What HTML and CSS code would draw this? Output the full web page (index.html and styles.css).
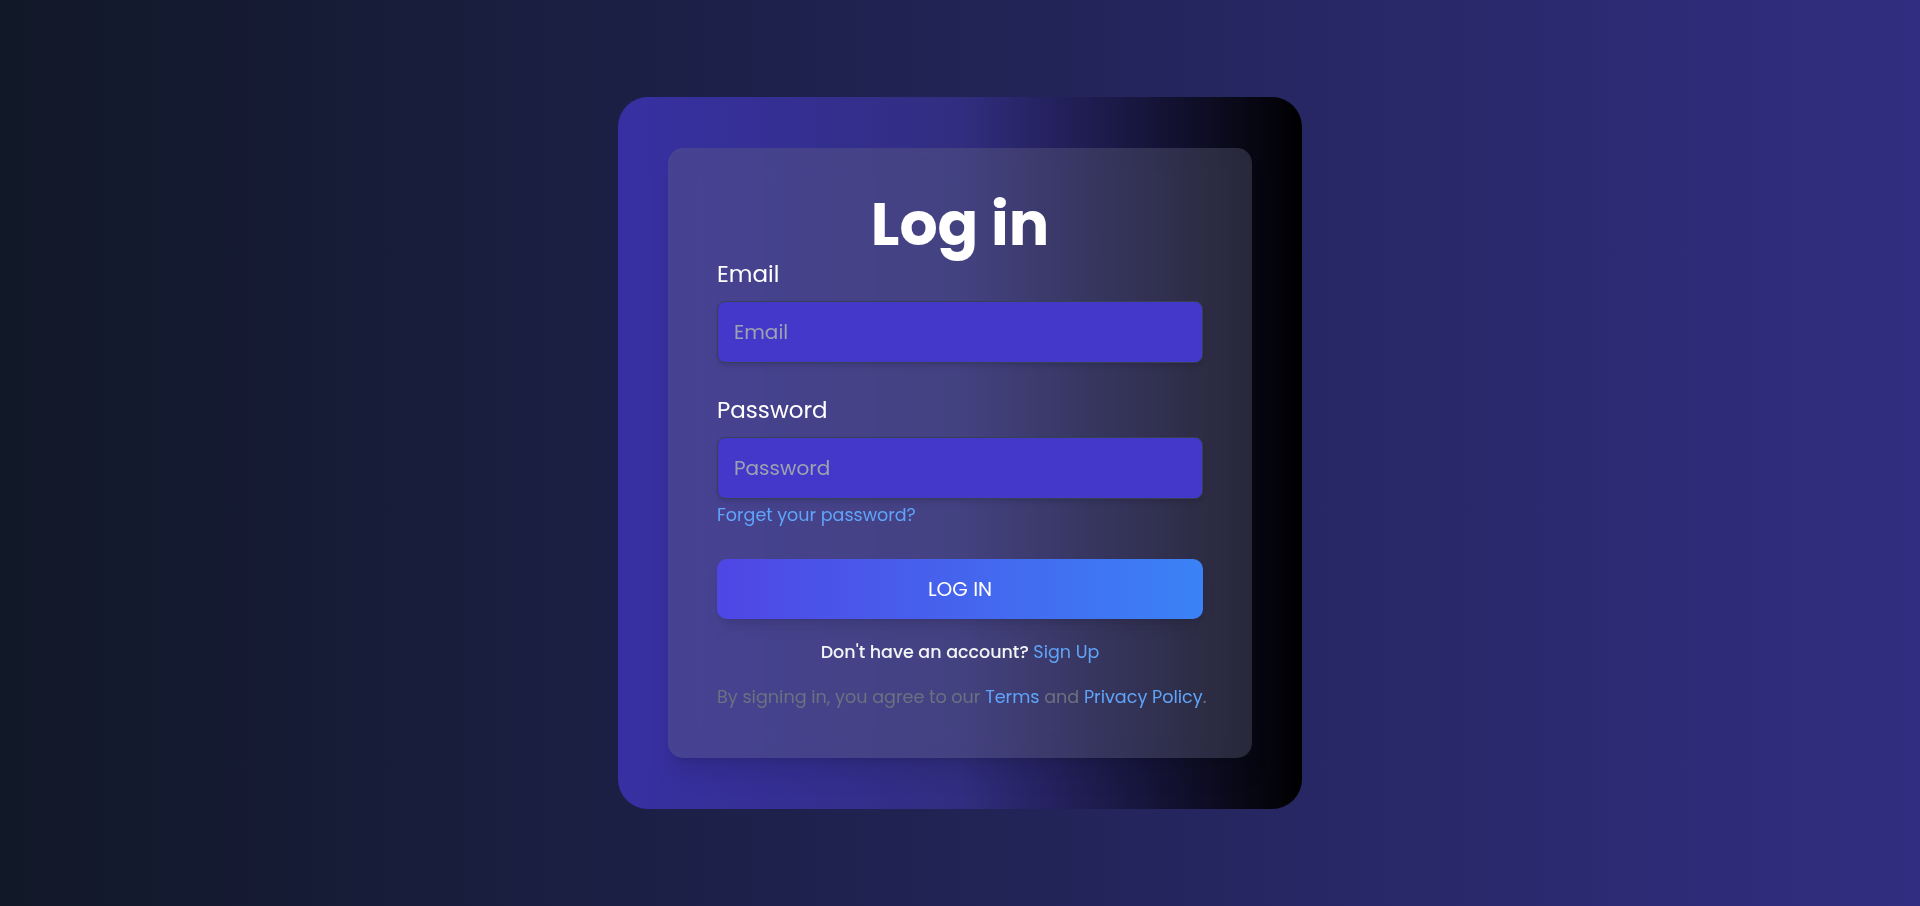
FILE: index.html
```html
<!DOCTYPE html>
<html lang="en">
<head>
<meta charset="utf-8">
<title>Log in</title>
<link rel="stylesheet" href="styles.css">
</head>
<body>
<main class="page">
  <section class="frame">
    <div class="card">
      <h1 class="title">Log in</h1>
      <form class="form">
        <div class="field">
          <label class="label" for="email">Email</label>
          <input class="input" id="email" type="email" placeholder="Email">
        </div>
        <div class="field field-last">
          <label class="label" for="password">Password</label>
          <input class="input" id="password" type="password" placeholder="Password">
        </div>
        <a class="forgot" href="#">Forget your password?</a>
        <button class="submit" type="button">LOG IN</button>
      </form>
      <p class="signup">Don't have an account? <a class="link" href="#">Sign Up</a></p>
      <p class="terms">By signing in, you agree to our <a class="link" href="#">Terms</a> and <a class="link" href="#">Privacy Policy</a>.</p>
    </div>
  </section>
</main>
</body>
</html>
```

FILE: styles.css
```css
* {
  box-sizing: border-box;
}

html, body {
  margin: 0;
  height: 100%;
}

body {
  font-family: "Poppins", "Open Sans", "Noto Sans", sans-serif;
  background: linear-gradient(to right, #111827, #312e81);
  color: #ffffff;
}

.page {
  height: 100vh;
  display: flex;
  align-items: center;
  justify-content: center;
}

.frame {
  width: 684px;
  padding: 51px 50px;
  border-radius: 30px;
  background: linear-gradient(to right, #3730a3 0%, #312e81 50%, #000000 100%);
}

.card {
  padding: 47px 49px 49px;
  border-radius: 15px;
  background: rgba(104, 102, 128, 0.35);
  backdrop-filter: blur(12px);
  box-shadow: 0 20px 25px -5px rgba(0, 0, 0, 0.1), 0 8px 10px -6px rgba(0, 0, 0, 0.1);
}

.title {
  margin: 0 0 7px;
  font-size: 60px;
  line-height: 58px;
  font-weight: 700;
  text-align: center;
  color: #ffffff;
}

.form {
  display: flex;
  flex-direction: column;
}

.field {
  display: flex;
  flex-direction: column;
  margin-bottom: 33px;
}

.field-last {
  margin-bottom: 0;
}

.label {
  font-size: 23px;
  line-height: 28px;
  font-weight: 400;
  color: #ffffff;
  margin-bottom: 13px;
}

.input {
  height: 62px;
  width: 100%;
  padding: 0 16px;
  border: 1px solid #374151;
  border-radius: 8px;
  background: #4338ca;
  color: #ffffff;
  font-family: inherit;
  font-size: 20px;
  outline: none;
  box-shadow: 0 4px 6px -1px rgba(0, 0, 0, 0.1), 0 2px 4px -2px rgba(0, 0, 0, 0.1);
}

.input::placeholder {
  color: #9ca3af;
}

.forgot {
  align-self: flex-start;
  margin-top: 4px;
  font-size: 17.5px;
  line-height: 24px;
  color: #60a5fa;
  text-decoration: none;
}

.submit {
  margin-top: 32px;
  height: 60px;
  width: 100%;
  border: none;
  border-radius: 10px;
  background: linear-gradient(to right, #4f46e5, #3b82f6);
  color: #ffffff;
  font-family: inherit;
  font-size: 20px;
  font-weight: 400;
  cursor: pointer;
  box-shadow: 0 10px 15px -3px rgba(0, 0, 0, 0.1), 0 4px 6px -4px rgba(0, 0, 0, 0.1);
}

.signup {
  margin: 21px 0 0;
  font-size: 17.5px;
  line-height: 24px;
  font-weight: 500;
  text-align: center;
  color: #f3f4f6;
}

.terms {
  margin: 21px 0 0;
  font-size: 17.6px;
  line-height: 24px;
  text-align: center;
  white-space: nowrap;
  color: #6b7280;
}

.link {
  color: #60a5fa;
  font-weight: 400;
  text-decoration: none;
}
```
